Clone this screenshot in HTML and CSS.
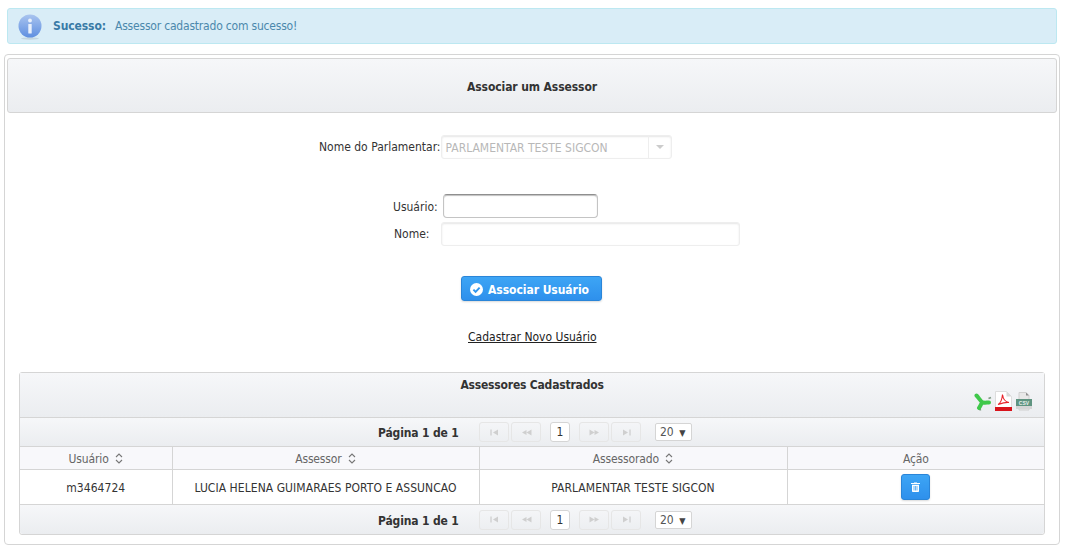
FILE: index.html
```html
<!DOCTYPE html>
<html lang="pt">
<head>
    <meta charset="UTF-8">
    <title>Associar um Assessor</title>
    <link rel="stylesheet" href="styles.css">
</head>
<body>

    <svg class="sprites" width="0" height="0">
        <symbol id="pg-first" viewBox="0 0 9 7"><path d="M1 .5v6" stroke="#c4c4c4" fill="none"/><path d="M8 .5v6L3 3.500z" fill="#cfcfcf"/></symbol>
        <symbol id="pg-prev" viewBox="0 0 11 7"><path d="M5.500 1v5L1 3.500zM10.500 .5v6L5.500 3.500z" fill="#cfcfcf"/></symbol>
        <symbol id="pg-next" viewBox="0 0 11 7"><path d="M.5 .5v6l5-3zM5.500 1v5l4.500-2.500z" fill="#cfcfcf"/></symbol>
        <symbol id="pg-last" viewBox="0 0 9 7"><path d="M1 .5v6l5-3z" fill="#cfcfcf"/><path d="M8 .5v6" stroke="#c4c4c4" fill="none"/></symbol>
        <symbol id="sort-icon" viewBox="0 0 8 11"><path d="M1 4l3-3 3 3M1 7l3 3 3-3" fill="none" stroke="#777" stroke-width="1.100"/></symbol>
    </svg>

    <div class="alert">
        <svg class="alert-icon" width="24" height="26" viewBox="0 0 24 26">
            <defs>
                <linearGradient id="infoGrad" x1="0" y1="0" x2="0" y2="1">
                    <stop offset="0" stop-color="#a9c4ef"/>
                    <stop offset="1" stop-color="#5f8fe0"/>
                </linearGradient>
            </defs>
            <ellipse cx="12" cy="24.500" rx="9" ry="1.200" fill="#c3d5df"/>
            <circle cx="12" cy="12" r="11.500" fill="url(#infoGrad)"/>
            <circle cx="12" cy="6.500" r="1.900" fill="#e8f0fb"/>
            <rect x="10.300" y="10" width="3.400" height="9.500" rx="0.600" fill="#e8f0fb"/>
        </svg>
        <strong>Sucesso:</strong>
        <span>Assessor cadastrado com sucesso!</span>
    </div>

    <div class="panel">
        <div class="panel-header">Associar um Assessor</div>

        <div class="form-row row-parlamentar">
            <label>Nome do Parlamentar:</label>
            <div class="select-disabled">
                <span class="select-text">PARLAMENTAR TESTE SIGCON</span>
                <span class="select-arrow"></span>
            </div>
        </div>

        <div class="form-row row-usuario">
            <label>Usuário:</label>
            <input class="input-focus" type="text">
        </div>

        <div class="form-row row-nome">
            <label>Nome:</label>
            <input class="input-plain" type="text">
        </div>

        <div class="actions">
            <button class="btn-primary" type="button">
                <svg width="13" height="13" viewBox="0 0 13 13">
                    <circle cx="6.500" cy="6.500" r="6.500" fill="#fff"/>
                    <path d="M3.400 6.700l2.200 2.200 4-4.200" fill="none" stroke="#2f96ee" stroke-width="1.900"/>
                </svg>
                Associar Usuário
            </button>
        </div>

        <div class="link-row"><a href="#">Cadastrar Novo Usuário</a></div>

        <div class="grid">
            <div class="grid-caption">
                <div class="grid-title">Assessores Cadastrados</div>
                <div class="export-icons">
                    <svg width="18" height="18" viewBox="0 0 18 18">
                        <path d="M5.500 15l1 2.500M14.500 5.500l2.500-1" stroke="#7f9a84" stroke-width="1.800"/>
                        <path d="M2.500 2.500c2 2 3.500 5 6 7M9 9.500c2 .5 4 0 6 0M8 9.500c-1 2-1.500 3.500-3 5.500" fill="none" stroke="#3fc84a" stroke-width="4" stroke-linecap="round"/>
                    </svg>
                    <svg width="17" height="20" viewBox="0 0 17 20">
                        <path d="M.5 .5h11l5 5V19.500H.5z" fill="#fff" stroke="#ddd"/>
                        <path d="M11.500 .5v5h5z" fill="#d8d8d8"/>
                        <path d="M3 13.500c2-1 4-4.500 4.500-10 .5 4 3 7.500 6.500 8-3-.5-6.500 .5-11 2z" fill="none" stroke="#e8232a" stroke-width="1.100"/>
                        <rect x="0" y="16" width="17" height="4" fill="#d8131b"/>
                    </svg>
                    <svg width="18" height="19" viewBox="0 0 18 19">
                        <path d="M4 .5h7l3 3V18H4z" fill="#e8e8e8" stroke="#d0d0d0"/>
                        <path d="M11 .5l3 3h-3z" fill="#8f8f8f"/>
                        <rect x="1" y="7" width="16" height="7" fill="#5f9480"/>
                        <path d="M1 14h16v3H1z" fill="#d5d5d5"/>
                        <text x="9" y="12.500" text-anchor="middle" class="csv-label">CSV</text>
                    </svg>
                </div>
            </div>

            <div class="pager pager-top">
                <span class="pager-label">Página 1 de 1</span>
                <span class="pager-btn"><svg width="9" height="7"><use href="#pg-first"/></svg></span>
                <span class="pager-btn"><svg width="11" height="7"><use href="#pg-prev"/></svg></span>
                <span class="pager-current">1</span>
                <span class="pager-btn"><svg width="11" height="7"><use href="#pg-next"/></svg></span>
                <span class="pager-btn"><svg width="9" height="7"><use href="#pg-last"/></svg></span>
                <span class="pager-size">20 <i>▼</i></span>
            </div>

            <table>
                <colgroup>
                    <col class="col-usuario">
                    <col class="col-assessor">
                    <col class="col-assessorado">
                    <col>
                </colgroup>
                <thead>
                    <tr>
                        <th>Usuário <svg class="sort" width="8" height="11"><use href="#sort-icon"/></svg></th>
                        <th>Assessor <svg class="sort" width="8" height="11"><use href="#sort-icon"/></svg></th>
                        <th>Assessorado <svg class="sort" width="8" height="11"><use href="#sort-icon"/></svg></th>
                        <th>Ação</th>
                    </tr>
                </thead>
                <tbody>
                    <tr>
                        <td>m3464724</td>
                        <td>LUCIA HELENA GUIMARAES PORTO E ASSUNCAO</td>
                        <td>PARLAMENTAR TESTE SIGCON</td>
                        <td class="cell-action">
                            <button class="btn-trash" type="button">
                                <svg width="9" height="10" viewBox="0 0 9 10">
                                    <path d="M3 1V.4h3V1h3v1H0V1zM1 2.800h7V9.200c0 .4-.3 .8-.8 .8H1.800c-.5 0-.8-.4-.8-.8z" fill="#fff"/>
                                    <path d="M3 4v4.500M4.500 4v4.500M6 4v4.500" stroke="#2f96ee" stroke-width=".7"/>
                                </svg>
                            </button>
                        </td>
                    </tr>
                </tbody>
            </table>

            <div class="pager pager-bottom">
                <span class="pager-label">Página 1 de 1</span>
                <span class="pager-btn"><svg width="9" height="7"><use href="#pg-first"/></svg></span>
                <span class="pager-btn"><svg width="11" height="7"><use href="#pg-prev"/></svg></span>
                <span class="pager-current">1</span>
                <span class="pager-btn"><svg width="11" height="7"><use href="#pg-next"/></svg></span>
                <span class="pager-btn"><svg width="9" height="7"><use href="#pg-last"/></svg></span>
                <span class="pager-size">20 <i>▼</i></span>
            </div>
        </div>
    </div>

</body>
</html>
```

FILE: styles.css
```css
body {
    font-family: "DejaVu Sans Condensed", "DejaVu Sans", sans-serif;
    font-size: 12px;
    color: #222;
    background-color: #ffffff;
    margin: 8px 5px 0 4px;
}

.sprites {
    display: block;
    height: 0;
}

/* Mensagem de sucesso */
.alert {
    display: flex;
    align-items: center;
    height: 34px;
    margin: 0 3px 10px 3px;
    padding-left: 10px;
    background-color: #d9edf7;
    border: 1px solid #bce8f1;
    border-radius: 3px;
    color: #4b88ac;
}

.alert-icon {
    margin-right: 11px;
    margin-top: 2px;
}

.alert strong {
    margin-right: 9px;
    letter-spacing: -0.1px;
    color: #3a7ba6;
}

.alert span {
    letter-spacing: -0.2px;
}

/* Painel principal */
.panel {
    height: 486px;
    border: 1px solid #d5d5d5;
    border-radius: 4px;
    padding: 3px 2px 0 2px;
}

.panel-header {
    height: 53px;
    line-height: 57px;
    text-align: center;
    font-weight: bold;
    letter-spacing: -0.1px;
    color: #333;
    background: linear-gradient(#f6f7f9, #ebedf0);
    border: 1px solid #d5d5d5;
    border-radius: 3px;
}

.form-row {
    display: flex;
    align-items: center;
}

.form-row label {
    color: #333;
}

.row-parlamentar {
    margin: 22px 0 0 312px;
}

.select-disabled {
    display: flex;
    width: 229px;
    height: 22px;
    border: 1px solid #eeeeee;
    border-radius: 3px;
    box-shadow: inset 0 1px 2px rgba(0, 0, 0, 0.1);
}

.select-text {
    flex: 1;
    line-height: 24px;
    padding-left: 4px;
    color: #b8b8b8;
    border-right: 1px solid #eeeeee;
}

.select-arrow {
    width: 22px;
    position: relative;
}

.select-arrow::after {
    content: "";
    position: absolute;
    left: 7px;
    top: 9px;
    border-left: 4px solid transparent;
    border-right: 4px solid transparent;
    border-top: 4px solid #cccccc;
}

.row-usuario {
    margin: 35px 0 0 386px;
}

.row-usuario label {
    padding-top: 2px;
}

.input-focus {
    width: 155px;
    height: 24px;
    margin-left: 5px;
    padding: 0;
    box-sizing: border-box;
    border: 1px solid #c4c4c4;
    border-top-color: #8f8f8f;
    border-radius: 4px;
    box-shadow: inset 0 1px 1px rgba(0, 0, 0, 0.25);
    background-color: #fff;
    outline: none;
}

.row-nome {
    margin: 4px 0 0 387px;
}

.input-plain {
    width: 299px;
    height: 24px;
    margin-left: 12px;
    padding: 0;
    box-sizing: border-box;
    border: 1px solid #eeeeee;
    border-radius: 3px;
    box-shadow: inset 0 1px 2px rgba(0, 0, 0, 0.1);
    background-color: #fff;
}

.actions {
    margin: 30px 0 0 454px;
}

.btn-primary {
    display: flex;
    align-items: center;
    gap: 5px;
    width: 141px;
    height: 25px;
    padding: 2px 0 0 8px;
    font-family: inherit;
    font-size: 12px;
    font-weight: bold;
    letter-spacing: -0.05px;
    color: #fff;
    background: linear-gradient(#3da5f5, #2e90ec);
    border: 1px solid #2a85d8;
    border-radius: 3px;
    box-shadow: 0 1px 2px rgba(0, 0, 0, 0.15);
}

.link-row {
    margin: 29px 0 0 0;
    padding-left: 461px;
    height: 16px;
}

.link-row a {
    color: #222;
}

/* Tabela */
.grid {
    margin: 26px 12px 0 12px;
    border: 1px solid #d5d5d5;
    border-radius: 3px;
}

.grid-caption {
    height: 44px;
    background: linear-gradient(#f6f7f9, #ebedf0);
    border-bottom: 1px solid #d5d5d5;
}

.grid-title {
    text-align: center;
    font-weight: bold;
    letter-spacing: -0.2px;
    color: #333;
    padding-top: 5px;
    line-height: 15px;
}

.export-icons {
    display: flex;
    justify-content: flex-end;
    align-items: flex-end;
    gap: 3px;
    padding: 0 11px 0 0;
    height: 18px;
}

.csv-label {
    font-family: "Liberation Sans", sans-serif;
    font-size: 5px;
    font-weight: bold;
    fill: #e8f0ec;
}

.pager {
    display: flex;
    align-items: center;
    height: 28px;
    padding-left: 358px;
    background: linear-gradient(#f6f7f9, #ebedf0);
}

.pager-top {
    border-bottom: 1px solid #d5d5d5;
}

.pager-bottom {
    height: 29px;
    border-top: 1px solid #d5d5d5;
    border-radius: 0 0 3px 3px;
}

.pager-label {
    width: 101px;
    padding-top: 2px;
    font-weight: bold;
    letter-spacing: -0.15px;
    color: #333;
}

.pager-btn {
    display: flex;
    align-items: center;
    justify-content: center;
    width: 28px;
    height: 18px;
    margin-right: 2px;
    border: 1px solid #e6e6e6;
    border-radius: 3px;
}

.pager-current {
    width: 18px;
    height: 18px;
    margin: 0 9px 0 7px;
    line-height: 18px;
    text-align: center;
    color: #333;
    background-color: #fff;
    border: 1px solid #d5d5d5;
    border-radius: 3px;
}

.pager-size {
    width: 31px;
    height: 16px;
    margin-left: 12px;
    padding-left: 4px;
    line-height: 16px;
    white-space: nowrap;
    color: #555;
    background-color: #fff;
    border: 1px solid #d5d5d5;
    border-radius: 2px;
}

.pager-size i {
    font-style: normal;
    font-size: 9px;
    color: #444;
    margin-left: 2px;
}

table {
    width: 100%;
    border-collapse: collapse;
    table-layout: fixed;
}

.col-usuario {
    width: 152px;
}

.col-assessor {
    width: 307px;
}

.col-assessorado {
    width: 308px;
}

th, td {
    text-align: center;
    border: 1px solid #d5d5d5;
    border-top: none;
    padding: 0;
}

tr > :first-child {
    border-left: none;
}

tr > :last-child {
    border-right: none;
}

th {
    height: 21px;
    padding-top: 1px;
    font-weight: normal;
    letter-spacing: -0.15px;
    color: #666;
    background-color: #f8f8fb;
}

td {
    height: 32px;
    padding-top: 2px;
    letter-spacing: 0.06px;
    color: #333;
}

td.cell-action {
    padding-top: 0;
    height: 34px;
}

tbody tr td {
    border-bottom: none;
}

.sort {
    margin-left: 3px;
    vertical-align: -1px;
}

.btn-trash {
    width: 29px;
    height: 26px;
    padding: 0;
    vertical-align: middle;
    background: linear-gradient(#3da5f5, #2e90ec);
    border: 1px solid #2a85d8;
    border-radius: 3px;
    box-shadow: 0 1px 2px rgba(0, 0, 0, 0.15);
}
```
